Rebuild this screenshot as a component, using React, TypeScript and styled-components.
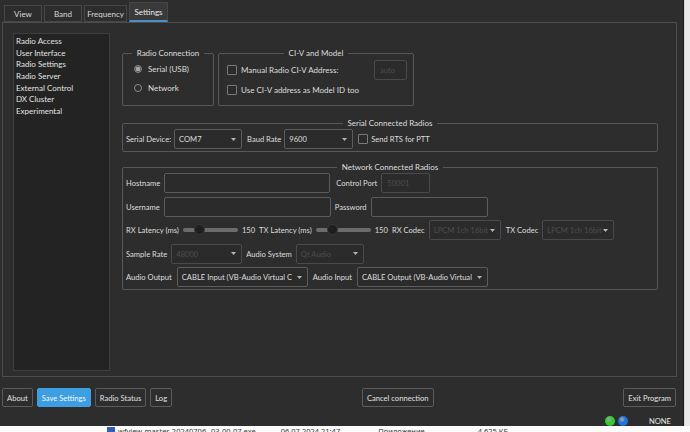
import React from "react";
import styled, { createGlobalStyle } from "styled-components";

const GlobalStyle = createGlobalStyle`
  html, body {
    margin: 0;
    padding: 0;
  }
  body {
    font-family: Lato, "Noto Sans", sans-serif;
    font-size: 7.6px;
    color: #dedede;
    background: #efefef;
  }
`;

const Page = styled.div`
  width: 690px;
  height: 432px;
  display: grid;
  grid-template-columns: 684px 6px;
  grid-template-rows: 426px 6px;
  overflow: hidden;
  background: #f2f2f2;
`;

const Window = styled.div`
  background: #2d2d2d;
  display: flex;
  flex-direction: column;
  border-right: 1px solid #1c1c1c;
  box-sizing: border-box;
  overflow: hidden;
  & > * {
    flex: none;
  }
`;

const SideStrip = styled.div`
  background: #e9e9e9;
  border-left: 1px solid #d6d6d6;
`;

const FileRow = styled.div`
  grid-column: 1 / span 2;
  height: 6px;
  overflow: hidden;
  background: #fbfbfb;
  display: flex;
  align-items: flex-start;
  font-size: 7.5px;
  line-height: 8px;
  color: #3a3a3a;
  font-family: "Noto Sans", sans-serif;
  span {
    white-space: nowrap;
    margin-top: 1px;
  }
`;

const FileIcon = styled.span`
  display: inline-block;
  width: 8px;
  height: 8px;
  background: #2f5fae;
  margin: 1px 3px 0 107px;
`;

const TabBar = styled.div`
  display: flex;
  align-items: flex-end;
  gap: 2px;
  height: 22px;
  padding-left: 4px;
`;

const Tab = styled.div<{ $active?: boolean }>`
  height: ${({ $active }) => ($active ? 20 : 17)}px;
  width: ${({ $active }) => ($active ? 39 : 38)}px;
  box-sizing: border-box;
  display: flex;
  align-items: center;
  justify-content: center;
  font-size: 8px;
  color: ${({ $active }) => ($active ? "#e8e8e8" : "#d8d8d8")};
  background: ${({ $active }) => ($active ? "#3a3a3a" : "#2d2d2d")};
  border: 1px solid #474747;
  border-bottom: ${({ $active }) =>
    $active ? "2px solid #4a8fc7" : "1px solid #474747"};
  white-space: nowrap;
`;

const Pane = styled.div`
  height: 355px;
  margin: 0 6px 0 2px;
  box-sizing: border-box;
  border: 1px solid #4d4d4d;
  display: flex;
  padding: 10px 0 5px 10px;
`;

const SideList = styled.ul`
  list-style: none;
  margin: 0;
  width: 97px;
  box-sizing: border-box;
  background: #232323;
  border: 1px solid #3e3e3e;
  padding: 2px 0 0 2px;
  font-size: 8px;
  li {
    height: 11.7px;
    line-height: 11.7px;
    white-space: nowrap;
    color: #e2e2e2;
  }
`;

const RightCol = styled.div`
  display: flex;
  flex-direction: column;
  margin-left: 12px;
  padding-top: 15px;
  width: 536px;
`;

const GroupRow = styled.div`
  display: flex;
  gap: 4px;
`;

const Group = styled.fieldset<{ $w?: number; $h?: number }>`
  margin: 0;
  box-sizing: border-box;
  width: ${({ $w }) => ($w ? `${$w}px` : "auto")};
  height: ${({ $h }) => ($h ? `${$h}px` : "auto")};
  border: 1px solid #585858;
  border-radius: 2px;
  padding: 0 3px 3px 3px;
  min-width: 0;
  legend {
    margin: 0 auto;
    padding: 0 5px;
    line-height: 11px;
    font-size: 8px;
    color: #dedede;
    white-space: nowrap;
  }
`;

const Stack = styled.div<{ $gap: number; $pad?: number }>`
  display: flex;
  flex-direction: column;
  gap: ${({ $gap }) => $gap}px;
  padding-top: ${({ $pad }) => $pad ?? 0}px;
`;

const Line = styled.div<{ $gap?: number }>`
  display: flex;
  align-items: center;
  gap: ${({ $gap }) => $gap ?? 4}px;
  height: 20px;
  white-space: nowrap;
`;

const Option = styled.div`
  display: flex;
  align-items: center;
  gap: 6px;
  height: 12px;
  padding-left: 8px;
  white-space: nowrap;
  font-size: 8px;
`;

const RadioDot = styled.span<{ $on?: boolean }>`
  width: 8px;
  height: 8px;
  box-sizing: border-box;
  border-radius: 50%;
  border: 1px solid #8a8a8a;
  background: ${({ $on }) =>
    $on ? "radial-gradient(circle, #a4a4a4 0 2px, #555 2.5px)" : "#2d2d2d"};
`;

const Check = styled.span`
  width: 10px;
  height: 10px;
  box-sizing: border-box;
  border: 1px solid #7a7a7a;
  border-radius: 1px;
  background: #2b2b2b;
  flex: none;
`;

const Field = styled.div<{ $w: number; $off?: boolean }>`
  width: ${({ $w }) => $w}px;
  height: 20px;
  box-sizing: border-box;
  border: 1px solid ${({ $off }) => ($off ? "#4a4a4a" : "#5c5c5c")};
  border-radius: 2px;
  background: #2b2b2b;
  color: ${({ $off }) => ($off ? "#4d4d4d" : "#dedede")};
  display: flex;
  align-items: center;
  padding-left: 5px;
  flex: none;
  overflow: hidden;
  white-space: nowrap;
`;

const Combo = styled(Field)`
  justify-content: space-between;
  padding-left: 4px;
  padding-right: 5px;
  span {
    overflow: hidden;
  }
  svg {
    flex: none;
    margin-left: 2px;
  }
`;

const Slider = styled.div`
  position: relative;
  width: 55px;
  height: 4px;
  border-radius: 2px;
  background: #6c6c6c;
  flex: none;
`;

const Knob = styled.span`
  position: absolute;
  top: -4px;
  width: 11px;
  height: 11px;
  margin-left: -5px;
  border-radius: 50%;
  background: #1f1f1f;
  border: 1px solid #3a3a3a;
  box-sizing: border-box;
`;

const ButtonBar = styled.div`
  display: flex;
  align-items: center;
  gap: 4px;
  padding: 11px 7px 0 2px;
`;

const Spacer = styled.div`
  flex: 1;
`;

const Button = styled.div<{ $primary?: boolean }>`
  height: 19px;
  box-sizing: border-box;
  padding: 0 4px;
  display: flex;
  align-items: center;
  border: 1px solid ${({ $primary }) => ($primary ? "#3f9fe0" : "#5c5c5c")};
  border-radius: 2px;
  background: ${({ $primary }) => ($primary ? "#3d9fe2" : "#2d2d2d")};
  color: ${({ $primary }) => ($primary ? "#f4f8fb" : "#e0e0e0")};
  white-space: nowrap;
`;

const StatusBar = styled.div`
  display: flex;
  align-items: center;
  justify-content: flex-end;
  height: 11px;
  margin-top: 8px;
  padding-right: 12px;
  gap: 3px;
`;

const Led = styled.span<{ $color: string }>`
  width: 10px;
  height: 10px;
  border-radius: 50%;
  background: radial-gradient(circle at 40% 35%, #ffffff88 0 1px, ${({ $color }) => $color} 3px);
`;

const StatusText = styled.span`
  margin-left: 18px;
  color: #e6e6e6;
`;

function Arrow() {
  return (
    <svg width="5" height="3" viewBox="0 0 5 3">
      <path d="M0 0H5L2.5 3Z" fill="#b5b5b5" />
    </svg>
  );
}

function ComboBox({ w, value, off }: { w: number; value: string; off?: boolean }) {
  return (
    <Combo $w={w} $off={off}>
      <span>{value}</span>
      <Arrow />
    </Combo>
  );
}

function LatencySlider({ value, max }: { value: number; max: number }) {
  return (
    <Slider>
      <Knob style={{ left: `${(value / max) * 100}%` }} />
    </Slider>
  );
}

const menu = [
  "Radio Access",
  "User Interface",
  "Radio Settings",
  "Radio Server",
  "External Control",
  "DX Cluster",
  "Experimental",
];

export default function App() {
  return (
    <>
      <GlobalStyle />
      <Page>
        <Window>
          <TabBar>
            <Tab>View</Tab>
            <Tab>Band</Tab>
            <Tab style={{ width: 43 }}>Frequency</Tab>
            <Tab $active>Settings</Tab>
          </TabBar>
          <Pane>
            <SideList>
              {menu.map((m) => (
                <li key={m}>{m}</li>
              ))}
            </SideList>
            <RightCol>
              <GroupRow>
                <Group $w={92} $h={58}>
                  <legend>Radio Connection</legend>
                  <Stack $gap={7} $pad={4}>
                    <Option>
                      <RadioDot $on />
                      Serial (USB)
                    </Option>
                    <Option>
                      <RadioDot />
                      Network
                    </Option>
                  </Stack>
                </Group>
                <Group $w={196} $h={58}>
                  <legend>CI-V and Model</legend>
                  <Stack $gap={0} $pad={1}>
                    <Line>
                      <Option style={{ paddingLeft: 5, gap: 4 }}>
                        <Check />
                        Manual Radio CI-V Address:
                      </Option>
                      <Spacer />
                      <Field $w={33} $off style={{ marginRight: 3 }}>
                        auto
                      </Field>
                    </Line>
                    <Line>
                      <Option style={{ paddingLeft: 5, gap: 4 }}>
                        <Check />
                        Use CI-V address as Model ID too
                      </Option>
                    </Line>
                  </Stack>
                </Group>
              </GroupRow>

              <Group $h={34} style={{ marginTop: 12 }}>
                <legend>Serial Connected Radios</legend>
                <Line $gap={3}>
                  Serial Device:
                  <ComboBox w={68} value="COM7" />
                  <span style={{ marginLeft: 2 }}>Baud Rate</span>
                  <ComboBox w={69} value="9600" />
                  <Check style={{ marginLeft: 2 }} />
                  Send RTS for PTT
                </Line>
              </Group>

              <Group $h={128} style={{ marginTop: 10 }}>
                <legend>Network Connected Radios</legend>
                <Stack $gap={3.5} $pad={0}>
                  <Line>
                    Hostname
                    <Field $w={166} />
                    <span style={{ marginLeft: 2 }}>Control Port</span>
                    <Field $w={49} $off>
                      50001
                    </Field>
                  </Line>
                  <Line>
                    Username
                    <Field $w={167} />
                    Password
                    <Field $w={117} />
                  </Line>
                  <Line>
                    RX Latency (ms)
                    <LatencySlider value={150} max={500} />
                    150
                    <span>TX Latency (ms)</span>
                    <LatencySlider value={150} max={500} />
                    150
                    <span>RX Codec</span>
                    <ComboBox w={72} value="LPCM 1ch 16bit" off />
                    <span style={{ marginLeft: 1 }}>TX Codec</span>
                    <ComboBox w={72} value="LPCM 1ch 16bit" off />
                  </Line>
                  <Line>
                    Sample Rate
                    <ComboBox w={71} value="48000" off />
                    Audio System
                    <ComboBox w={68} value="Qt Audio" off />
                  </Line>
                  <Line $gap={5}>
                    Audio Output
                    <ComboBox w={131} value="CABLE Input (VB-Audio Virtual C" />
                    Audio Input
                    <ComboBox w={131} value="CABLE Output (VB-Audio Virtual" />
                  </Line>
                </Stack>
              </Group>
            </RightCol>
          </Pane>

          <ButtonBar>
            <Button>About</Button>
            <Button $primary>Save Settings</Button>
            <Button>Radio Status</Button>
            <Button>Log</Button>
            <Spacer />
            <Button>Cancel connection</Button>
            <Spacer />
            <Button>Exit Program</Button>
          </ButtonBar>
          <StatusBar>
            <Led $color="#2ecc2e" />
            <Led $color="#1f74e0" />
            <StatusText>NONE</StatusText>
          </StatusBar>
        </Window>
        <SideStrip />
        <FileRow>
          <FileIcon />
          <span>wfview-master-20240706--03-00-07.exe</span>
          <span style={{ marginLeft: 25 }}>06.07.2024 21:47</span>
          <span style={{ marginLeft: 38 }}>Приложение</span>
          <span style={{ marginLeft: 53 }}>4 625 КБ</span>
        </FileRow>
      </Page>
    </>
  );
}
